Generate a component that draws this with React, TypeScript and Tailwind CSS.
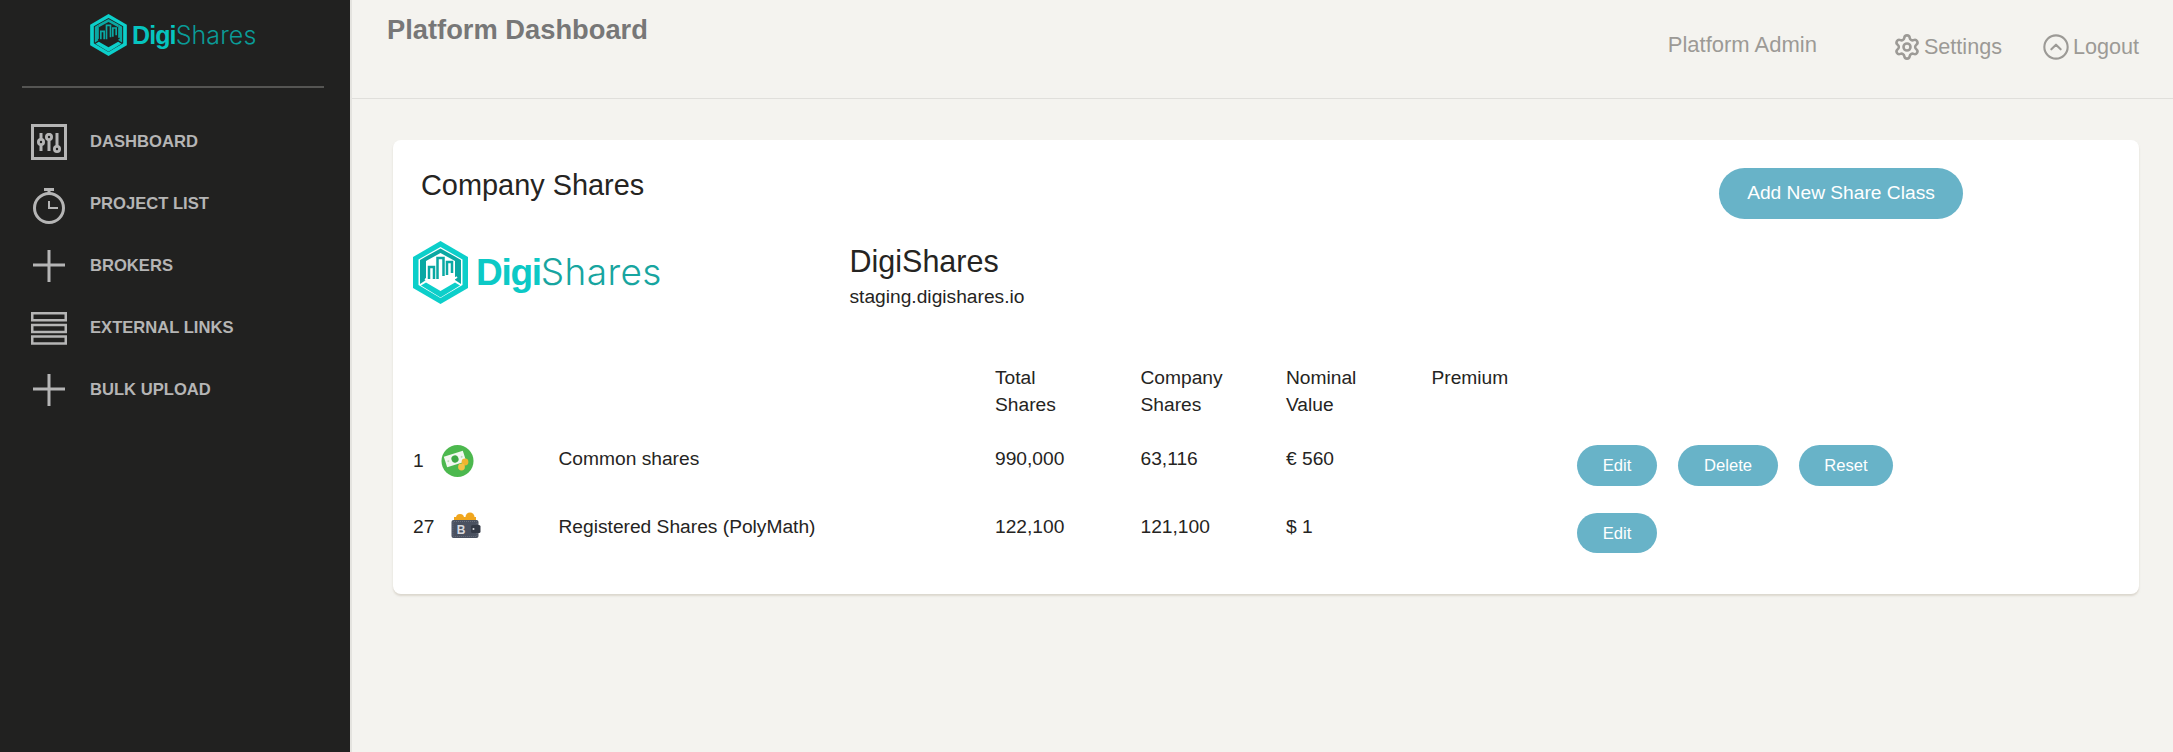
import { CircleChevronUp, Settings } from "lucide-react";

const font = "font-['Liberation_Sans',Arial,sans-serif]";

// hexagon mark of the logo, gap is the colour behind it
function LogoMark({ className, gap }: { className: string; gap: string }) {
  return (
    <svg viewBox="0 0 55 63" className={className}>
      <polygon points="27.5,0 55,16 55,47 27.5,63 0,47 0,16" fill="#0ccfca" />
      <polygon points="27.5,6 49.5,18.5 49.5,44 27.5,57 5.5,44 5.5,18.5" fill={gap} />
      <polygon points="7,19 13,15.5 13,39 7,43" fill="#0aa8a3" />
      <polygon points="48,19 42,15.5 42,39 48,43" fill="#0aa8a3" />
      <polygon points="13,15.5 27.5,7.5 42,15.5 42,20 27.5,12 13,20" fill="#0aa8a3" />
      <path d="M16 38V26h5v12M24.5 38V17h6v18M34 34V21h5v11" fill={gap} stroke="#0aa8a3" strokeWidth="2.5" />
      <path d="M12 38l15.5 8.5L44 36" fill="none" stroke={gap} strokeWidth="2" />
      <path d="M8 44.5l19.5 12 19.5-12-5-3-14.5 8.5-14.5-8.5z" fill="#0ccfca" />
    </svg>
  );
}

function Logo() {
  return (
    <div className="flex items-center">
      <LogoMark className="h-[63px] w-[55px]" gap="#ffffff" />
      <span className="ml-[8px] text-[37px] leading-[63px] whitespace-nowrap">
        <span className="font-bold tracking-[-1.3px] text-[#0cc9c6]">Digi</span>
        <span className="font-['Inter',sans-serif] font-light tracking-[0.4px] text-[#17a5a0]">Shares</span>
      </span>
    </div>
  );
}

function SideLogo() {
  return (
    <div className="flex items-center">
      <LogoMark className="h-[42px] w-[37px]" gap="#212120" />
      <span className="ml-[5px] text-[25px] leading-[42px] whitespace-nowrap">
        <span className="font-bold tracking-[-0.9px] text-[#06c4bf]">Digi</span>
        <span className="font-['Inter',sans-serif] font-light tracking-[0.1px] text-[#0a9c98]">Shares</span>
      </span>
    </div>
  );
}

function SlidersIcon() {
  return (
    <svg viewBox="0 0 36 36" className="h-[36px] w-[36px]" fill="none" stroke="#b5b5b5">
      <rect x="1.5" y="1.5" width="33" height="33" strokeWidth="3" />
      <path d="M10 9v18M18 9v18M26 9v18" strokeWidth="3" />
      <circle cx="10" cy="18" r="4" fill="#b5b5b5" strokeWidth="0" />
      <circle cx="18" cy="13" r="4" fill="#b5b5b5" strokeWidth="0" />
      <circle cx="26" cy="25" r="4" fill="#b5b5b5" strokeWidth="0" />
      <circle cx="10" cy="18" r="1.2" fill="#212120" strokeWidth="0" />
      <circle cx="18" cy="13" r="1.2" fill="#212120" strokeWidth="0" />
      <circle cx="26" cy="25" r="1.2" fill="#212120" strokeWidth="0" />
    </svg>
  );
}

function TimerIcon() {
  return (
    <svg viewBox="0 0 36 36" className="h-[36px] w-[36px] overflow-visible" fill="none" stroke="#b5b5b5">
      <circle cx="18" cy="22" r="14.5" strokeWidth="3" />
      <path d="M13 3.5h10M18 4v4" strokeWidth="3" />
      <path d="M18 15v7h9" strokeWidth="2" />
    </svg>
  );
}

function PlusIcon() {
  return (
    <svg viewBox="0 0 36 36" className="h-[36px] w-[36px]" fill="none" stroke="#b5b5b5" strokeWidth="3">
      <path d="M18 2v32M2 17h32" />
    </svg>
  );
}

function RowsIcon() {
  return (
    <svg viewBox="0 0 36 36" className="h-[36px] w-[36px]" fill="none" stroke="#b5b5b5" strokeWidth="2.5">
      <rect x="1.25" y="3.25" width="33.5" height="7" />
      <rect x="1.25" y="15" width="33.5" height="7" />
      <rect x="1.25" y="26.5" width="33.5" height="7" />
    </svg>
  );
}

function MoneyIcon() {
  return (
    <svg viewBox="0 0 33 32" className="h-[32px] w-[33px]">
      <circle cx="16.5" cy="16" r="16" fill="#4cb84e" />
      <g transform="rotate(-18 14 14)">
        <rect x="4" y="8.5" width="20" height="11" fill="#f2f7f0" />
        <circle cx="14" cy="14" r="3.6" fill="#3ea844" />
        <circle cx="7" cy="14" r="1" fill="#bcd9b8" />
        <circle cx="21" cy="14" r="1" fill="#bcd9b8" />
      </g>
      <circle cx="24" cy="17" r="3.4" fill="#f0b52e" />
      <circle cx="20.5" cy="22" r="3.4" fill="#f4c246" />
    </svg>
  );
}

function WalletIcon() {
  return (
    <svg viewBox="0 0 30 26" className="h-[26px] w-[30px]">
      <circle cx="9" cy="6" r="4" fill="#f0a61e" />
      <circle cx="19" cy="5" r="4.5" fill="#f0a61e" />
      <rect x="3" y="5" width="22" height="5" fill="#f0a61e" />
      <rect x="0.5" y="8" width="27" height="18" rx="2" fill="#4a5160" />
      <rect x="2" y="9.5" width="24" height="15" rx="1" fill="none" stroke="#8b909b" strokeWidth="0.5" strokeDasharray="1 1" />
      <rect x="20" y="13" width="9.5" height="8" rx="1.5" fill="#343a47" />
      <circle cx="22.5" cy="17" r="1" fill="#d8dade" />
      <text x="10" y="21.5" fontSize="12" fontWeight="700" fill="#d8dade" textAnchor="middle" fontFamily="Liberation Sans">B</text>
    </svg>
  );
}

const nav = [
  { label: "DASHBOARD", icon: <SlidersIcon /> },
  { label: "PROJECT LIST", icon: <TimerIcon /> },
  { label: "BROKERS", icon: <PlusIcon /> },
  { label: "EXTERNAL LINKS", icon: <RowsIcon /> },
  { label: "BULK UPLOAD", icon: <PlusIcon /> },
];

function Pill({ label, width, h = "h-[41px]" }: { label: string; width: string; h?: string }) {
  return (
    <button className={`${width} ${h} rounded-full bg-[#68b3c8] text-[16.6px] text-white`}>{label}</button>
  );
}

export default function App() {
  return (
    <div className={`${font} flex h-[752px] w-[2173px] overflow-hidden bg-[#f4f3ef] text-[#252422]`}>
      <aside className="h-full w-[352px] shrink-0 border-r-2 border-[#e4e3df] bg-[#212120]">
        <div className="pt-[14px] pl-[90px]">
          <SideLogo />
        </div>
        <div className="mt-[30px] mr-[26px] ml-[22px] h-[2px] bg-[#555553]" />
        <ul className="mt-[23px] flex flex-col">
          {nav.map((item) => (
            <li key={item.label} className="flex h-[62px] items-center pl-[31px]">
              {item.icon}
              <span className="ml-[23px] text-[16.6px] font-bold text-[#b5b5b5]">{item.label}</span>
            </li>
          ))}
        </ul>
      </aside>

      <main className="min-w-0 flex-1">
        <header className="flex h-[99px] items-start border-b border-[#e0dfdb] pr-[34px] pl-[35px]">
          <h1 className="mt-[14px] text-[27.3px] leading-[32px] font-bold text-[#777777]">Platform Dashboard</h1>
          <div className="ml-auto flex items-center pt-[33px] text-[21.6px] leading-[28px] text-[#9c9a96]">
            <span className="-translate-y-[2px] text-[22px]">Platform Admin</span>
            <Settings className="ml-[76px] h-[28px] w-[28px]" strokeWidth={2.2} />
            <span className="ml-[3px]">Settings</span>
            <CircleChevronUp className="ml-[40px] h-[28px] w-[28px]" strokeWidth={1.8} />
            <span className="ml-[3px]">Logout</span>
          </div>
        </header>

        <section className="mt-[41px] mr-[34px] ml-[41px] h-[454px] rounded-lg bg-white pt-[28px] pl-[20px] shadow-[0_2px_2px_rgba(204,197,185,0.6)]">
          <div className="flex items-start justify-between pr-[176px]">
            <h2 className="-mt-[1px] pl-[8px] text-[28.9px] leading-[36px]">Company Shares</h2>
            <button className="h-[51px] w-[244px] rounded-full bg-[#68b3c8] text-[19.2px] text-white">
              Add New Share Class
            </button>
          </div>

          <div className="mt-[21px] grid h-[124px] grid-cols-[repeat(12,145.5px)] items-start">
            <div className="col-span-3">
              <Logo />
            </div>
            <div className="col-span-9 pt-[3px]">
              <div className="text-[30.5px] leading-[36px]">DigiShares</div>
              <div className="mt-[4px] text-[19.2px] leading-[27px]">staging.digishares.io</div>
            </div>
          </div>

          <div className="grid h-[81px] grid-cols-[repeat(12,145.5px)] text-[19.2px] leading-[27px]">
            <div className="col-start-5">Total<br />Shares</div>
            <div>Company<br />Shares</div>
            <div>Nominal<br />Value</div>
            <div>Premium</div>
          </div>

          <div className="grid h-[68px] grid-cols-[repeat(12,145.5px)] text-[19.2px] leading-[27px]">
            <div className="flex items-start">
              <span className="mt-[2px] w-[28px]">1</span>
              <MoneyIcon />
            </div>
            <div className="col-span-3">Common shares</div>
            <div>990,000</div>
            <div>63,116</div>
            <div>€ 560</div>
            <div className="col-span-4 col-start-9 flex gap-[21px]">
              <Pill label="Edit" width="w-[80px]" />
              <Pill label="Delete" width="w-[100px]" />
              <Pill label="Reset" width="w-[94px]" />
            </div>
          </div>

          <div className="grid grid-cols-[repeat(12,145.5px)] text-[19.2px] leading-[27px]">
            <div className="flex items-start">
              <span className="w-[38px]">27</span>
              <span className="-mt-[1px]">
                <WalletIcon />
              </span>
            </div>
            <div className="col-span-3">Registered Shares (PolyMath)</div>
            <div>122,100</div>
            <div>121,100</div>
            <div>$ 1</div>
            <div className="col-span-4 col-start-9 flex">
              <Pill label="Edit" width="w-[80px]" h="h-[40px]" />
            </div>
          </div>
        </section>
      </main>
    </div>
  );
}
